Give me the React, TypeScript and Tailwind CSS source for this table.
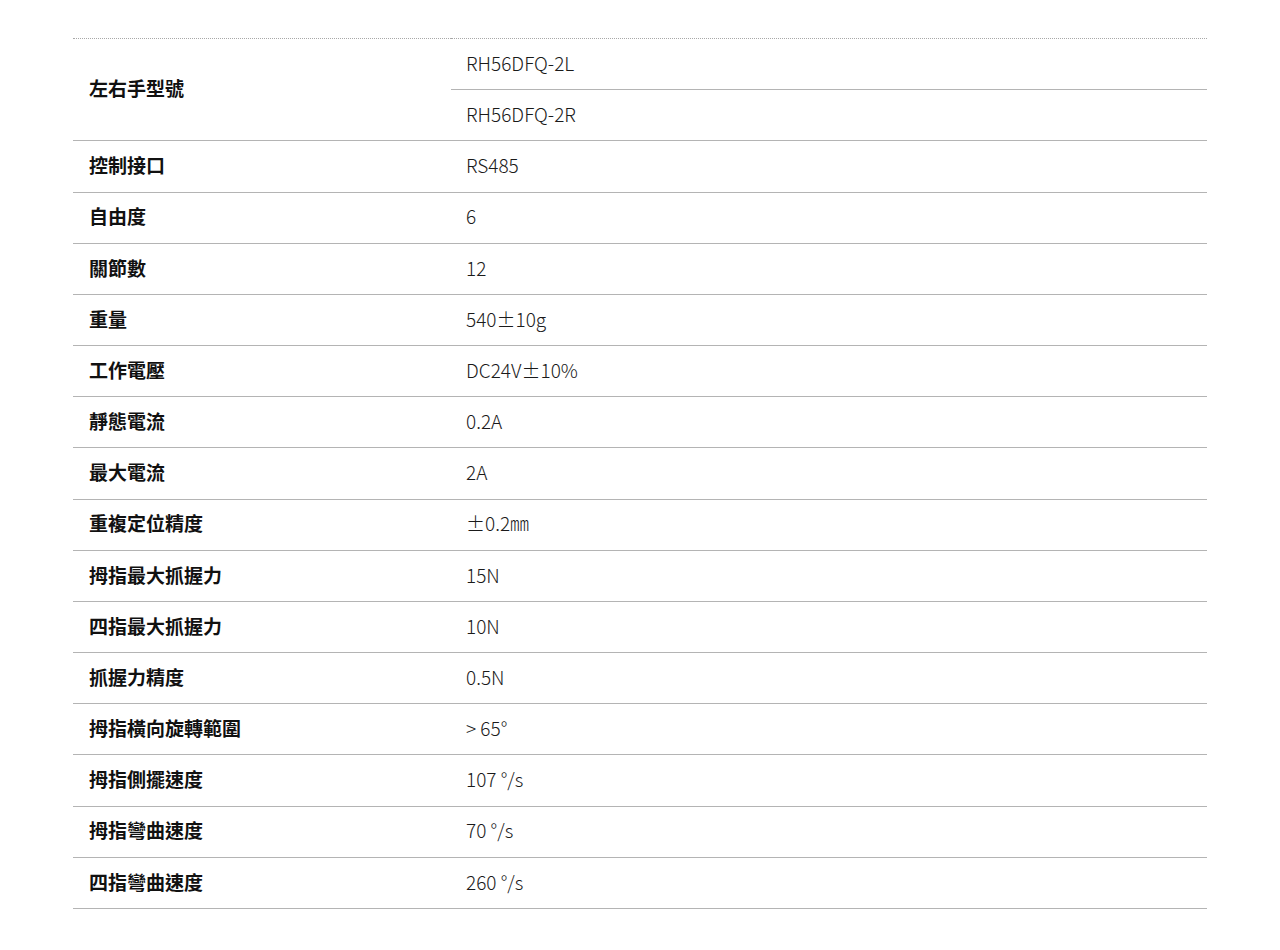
const SPECS: { label: string; values: string[] }[] = [
  { label: '左右手型號', values: ['RH56DFQ-2L', 'RH56DFQ-2R'] },
  { label: '控制接口', values: ['RS485'] },
  { label: '自由度', values: ['6'] },
  { label: '關節數', values: ['12'] },
  { label: '重量', values: ['540±10g'] },
  { label: '工作電壓', values: ['DC24V±10%'] },
  { label: '靜態電流', values: ['0.2A'] },
  { label: '最大電流', values: ['2A'] },
  { label: '重複定位精度', values: ['±0.2㎜'] },
  { label: '拇指最大抓握力', values: ['15N'] },
  { label: '四指最大抓握力', values: ['10N'] },
  { label: '抓握力精度', values: ['0.5N'] },
  { label: '拇指橫向旋轉範圍', values: ['> 65°'] },
  { label: '拇指側擺速度', values: ['107 °/s'] },
  { label: '拇指彎曲速度', values: ['70 °/s'] },
  { label: '四指彎曲速度', values: ['260 °/s'] },
];

export default function App() {
  return (
    <div
      className="min-h-[950px] bg-white pt-[38px]"
      style={{ fontFamily: '"Noto Sans CJK TC", "Noto Sans", sans-serif' }}
    >
      <table className="mx-auto w-[1134px] border-collapse border-t border-dotted border-[#a8a8a8] text-[19px]">
        <tbody>
          {SPECS.map((row) =>
            row.values.map((v, i) => (
              <tr key={row.label + i} className="h-[51.18px]">
                {i === 0 && (
                  <th
                    rowSpan={row.values.length}
                    className="w-[378px] border-b border-[#b4b4b4] pb-[2px] pl-4 text-left align-middle font-bold text-[#111111]"
                  >
                    {row.label}
                  </th>
                )}
                <td className="border-b border-[#b4b4b4] pb-[2px] pl-[15px] align-middle font-light text-[#1a1a1a]">
                  {v}
                </td>
              </tr>
            ))
          )}
        </tbody>
      </table>
    </div>
  );
}
